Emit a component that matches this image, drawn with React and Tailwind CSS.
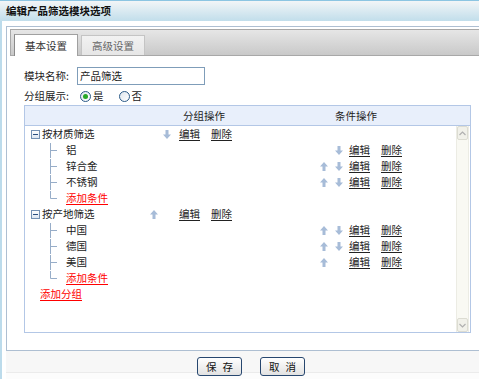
import React from "react";

const Up = () => (
  <svg width="8" height="9" viewBox="0 0 8 9" className="block">
    <path d="M4 0 L8 4.5 H5.5 V9 H2.5 V4.5 H0 Z" fill="#a7bcd8" />
  </svg>
);
const Down = () => (
  <svg width="8" height="9" viewBox="0 0 8 9" className="block">
    <path d="M4 9 L8 4.5 H5.5 V0 H2.5 V4.5 H0 Z" fill="#a7bcd8" />
  </svg>
);

const Minus = () => (
  <div className="w-[9px] h-[9px] border border-[#7591b4] bg-linear-to-b from-white to-[#dde6f2] flex items-center justify-center">
    <div className="w-[5px] h-px bg-[#2c4f80]" />
  </div>
);

const Tree = ({ last }) => (
  <svg width="16" height="16" viewBox="0 0 16 16" className="block shrink-0">
    <line x1="0.5" y1="1" x2="0.5" y2={last ? 8.5 : 16} stroke="#97adc8" strokeWidth="1" />
    <line x1="0.5" y1="8.5" x2="7" y2="8.5" stroke="#97adc8" strokeWidth="1" />
  </svg>
);

const Ops = () => (
  <>
    <div className="w-[32px]">
      <span className="underline underline-offset-[2px]">编辑</span>
    </div>
    <span className="underline underline-offset-[2px]">删除</span>
  </>
);

function GroupRow({ name, up, down }) {
  return (
    <div className="flex h-[16px] items-center">
      <div className="w-[125px] flex items-center pl-[6px]">
        <Minus />
        <span className="ml-[2px]">{name}</span>
      </div>
      <div className="w-[13px] flex">{up && <Up />}</div>
      <div className="w-[16px] flex">{down && <Down />}</div>
      <Ops />
    </div>
  );
}

function ChildRow({ name, up, down }) {
  return (
    <div className="flex h-[16px] items-center">
      <div className="w-[125px] flex items-center pl-[25px]">
        <Tree />
        <span>{name}</span>
      </div>
      <div className="w-[170px]" />
      <div className="w-[15px] flex">{up && <Up />}</div>
      <div className="w-[14px] flex">{down && <Down />}</div>
      <Ops />
    </div>
  );
}

function AddRow() {
  return (
    <div className="flex h-[16px] items-center">
      <div className="flex items-center pl-[25px]">
        <Tree last />
        <span className="text-[#ff0000] underline underline-offset-[2px]">添加条件</span>
      </div>
    </div>
  );
}

const Radio = ({ checked }) => (
  <div className="w-[11px] h-[11px] rounded-full border border-[#2b5a88] bg-linear-to-br from-[#dfe6ee] to-white flex items-center justify-center">
    {checked && <div className="w-[5px] h-[5px] rounded-full bg-[#27a827]" />}
  </div>
);

const Button = ({ a, b }) => (
  <div className="w-[45px] h-[19px] border border-[#27476f] rounded-[3px] bg-linear-to-b from-white to-[#e2e2e2] flex items-center justify-center gap-[6px] text-[#111]">
    <span>{a}</span>
    <span>{b}</span>
  </div>
);

export default function App() {
  return (
    <div className="w-[479px] h-[379px] overflow-hidden bg-white text-[10.5px] text-[#222] font-[Noto_Sans_CJK_SC,sans-serif] flex flex-col">
      <div className="h-[21px] shrink-0 border-t border-[#8cc5e2] bg-linear-to-b from-[#f2f5f7] to-[#c1deeb] pl-[6px] font-bold text-[#111] leading-[19px]">
        编辑产品筛选模块选项
      </div>
      <div className="h-[358px] border-l-2 border-[#bcdbeb] pl-[4px] pt-[5px] flex flex-col">
        <div className="h-[325px] border-t border-l border-b border-[#aebfd2] bg-white flex flex-col">
          <div className="mt-[2px] ml-[3px] h-[27px] border-t border-l border-b border-[#a8a8a8] bg-linear-to-b from-[#e6e6e6] to-[#c9c9c9] flex items-end pl-[3px] gap-[3px]">
            <div className="w-[64px] h-[22px] -mb-px bg-white border-t border-l border-r border-[#a0a0a0] border-l-[#8a8a8a] flex items-center justify-center text-[#333]">
              基本设置
            </div>
            <div className="w-[64px] h-[20px] bg-linear-to-b from-[#f2f2f2] to-[#e6e6e6] border-t border-l border-r border-[#c4c4c4] flex items-center justify-center text-[#666]">
              高级设置
            </div>
          </div>
          <div className="pl-[17px] flex flex-col">
            <div className="mt-[11px] h-[18px] flex items-center">
              <span className="w-[53px]">模块名称:</span>
              <div className="w-[128px] h-[18px] border border-[#7f9db9] pl-[2px] flex items-center">产品筛选</div>
            </div>
            <div className="mt-[3px] h-[16px] flex items-center">
              <span className="w-[56px]">分组展示:</span>
              <Radio checked />
              <span className="ml-[2px]">是</span>
              <div className="ml-[15px]"><Radio /></div>
              <span className="ml-[2px]">否</span>
            </div>
            <div className="mt-[1px] w-[447px] h-[228px] border border-[#b3c7e6] flex flex-col">
              <div className="h-[20px] shrink-0 border-b border-[#b3c7e6] bg-[#e8effb] flex items-center">
                <div className="w-[125px]" />
                <div className="w-[108px] text-center">分组操作</div>
                <div className="w-[196px] text-center">条件操作</div>
              </div>
              <div className="flex-1 flex">
                <div className="flex-1 flex flex-col">
                  <GroupRow name="按材质筛选" down />
                  <ChildRow name="铝" down />
                  <ChildRow name="锌合金" up down />
                  <ChildRow name="不锈钢" up down />
                  <AddRow />
                  <GroupRow name="按产地筛选" up />
                  <ChildRow name="中国" up down />
                  <ChildRow name="德国" up down />
                  <ChildRow name="美国" up />
                  <AddRow />
                  <div className="flex h-[16px] items-center pl-[15px]">
                    <span className="text-[#ff0000] underline underline-offset-[2px]">添加分组</span>
                  </div>
                </div>
                <div className="w-[13px] mr-[1px] bg-[#f9f9f3] border-l border-r border-[#ecece4] flex flex-col justify-between">
                  <div className="h-[14px] border border-[#dcdcd2] bg-[#f1f1ea] rounded-[2px] flex items-center justify-center">
                    <svg width="7" height="5" viewBox="0 0 7 5"><path d="M0.5 4 L3.5 1 L6.5 4" fill="none" stroke="#b0b0b0" strokeWidth="1.2" /></svg>
                  </div>
                  <div className="h-[14px] border border-[#dcdcd2] bg-[#f1f1ea] rounded-[2px] flex items-center justify-center">
                    <svg width="7" height="5" viewBox="0 0 7 5"><path d="M0.5 1 L3.5 4 L6.5 1" fill="none" stroke="#b0b0b0" strokeWidth="1.2" /></svg>
                  </div>
                </div>
              </div>
            </div>
          </div>
        </div>
        <div className="h-[28px] bg-[linear-gradient(#f7f7f7_0,#f7f7f7_21px,#ebebeb_21px,#ebebeb_22px,#fcfcfc_22px)] pt-[6px] pl-[191px] flex items-start gap-[18px]">
          <Button a="保" b="存" />
          <Button a="取" b="消" />
        </div>
      </div>
    </div>
  );
}
